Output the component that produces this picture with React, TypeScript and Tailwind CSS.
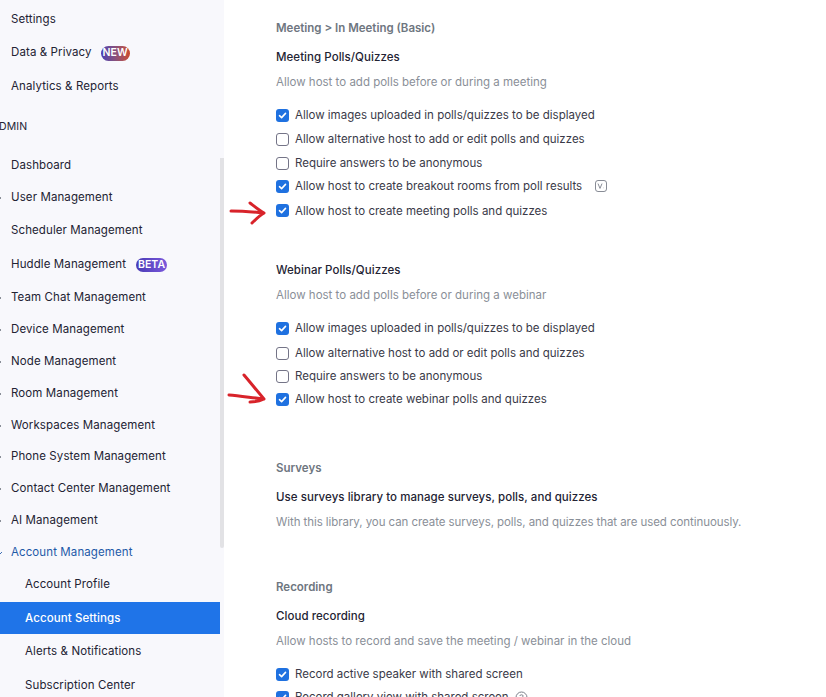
import React from "react";

function Chevron({ down, blue }: { down?: boolean; blue?: boolean }) {
  return (
    <svg width="6" height="6" viewBox="0 0 6 6" className="-ml-[3px] mr-[8px] shrink-0" fill="none" stroke={blue ? "#3f6fb5" : "#8a8f98"} strokeWidth="1">
      {down ? <path d="M1 2 L3 4 L5 2" /> : <path d="M2 1 L4 3 L2 5" />}
    </svg>
  );
}

type Item = { label: string; h: string; chevron?: boolean; badge?: "new" | "beta" };

const items: Item[] = [
  { label: "Settings", h: "h-[32px]" },
  { label: "Data & Privacy", h: "h-[34px]", badge: "new" },
  { label: "Analytics & Reports", h: "h-[34px]" },
];

const admin: Item[] = [
  { label: "Dashboard", h: "h-[32px]" },
  { label: "User Management", h: "h-[32px]", chevron: true },
  { label: "Scheduler Management", h: "h-[34px]" },
  { label: "Huddle Management", h: "h-[34px]", badge: "beta" },
  { label: "Team Chat Management", h: "h-[32px]", chevron: true },
  { label: "Device Management", h: "h-[32px]", chevron: true },
  { label: "Node Management", h: "h-[32px]", chevron: true },
  { label: "Room Management", h: "h-[32px]", chevron: true },
  { label: "Workspaces Management", h: "h-[32px]", chevron: true },
  { label: "Phone System Management", h: "h-[30px]", chevron: true },
  { label: "Contact Center Management", h: "h-[33px]", chevron: true },
  { label: "AI Management", h: "h-[32px]", chevron: true },
];

function NavRow({ item }: { item: Item }) {
  return (
    <div className={`${item.h} flex items-center pt-[2px] ${item.chevron ? "" : "pl-[11px]"} text-[11.5px] tracking-[0.1px] text-[#232333]`}>
      {item.chevron && <Chevron />}
      <span>{item.label}</span>
      {item.badge === "new" && (
        <span className="ml-[9px] flex h-[15px] w-[29px] items-center justify-center rounded-full bg-gradient-to-r from-[#4b3cb4] to-[#cb4a26] text-[10.5px] font-semibold text-white">NEW</span>
      )}
      {item.badge === "beta" && (
        <span className="ml-[10px] flex h-[14px] w-[31px] items-center justify-center rounded-full bg-gradient-to-r from-[#4a3bb5] to-[#7b58dc] text-[10.5px] font-semibold text-white">BETA</span>
      )}
    </div>
  );
}

function Sidebar() {
  return (
    <aside className="relative h-[697px] w-[224px] shrink-0 overflow-hidden bg-[#f8f8fc] pt-[3px]">
      <div className="w-[220px]">
        {items.map((i) => <NavRow key={i.label} item={i} />)}
        <div className="-ml-[1px] flex h-[46px] items-center pt-[2px] text-[10.5px] tracking-[0.1px] text-[#232333]">DMIN</div>
        {admin.map((i) => <NavRow key={i.label} item={i} />)}
        <div className="flex h-[32px] items-center pt-[2px] text-[11.5px] tracking-[0.1px] text-[#1f5aa8]">
          <Chevron down blue />
          <span>Account Management</span>
        </div>
        <div className="flex h-[34px] items-center pl-[25px] text-[11.5px] tracking-[0.1px] text-[#232333]">Account Profile</div>
        <div className="flex h-[32px] items-center bg-[#1f74e8] pl-[25px] pt-[2px] text-[11.5px] font-medium tracking-[0.1px] text-white">Account Settings</div>
        <div className="flex h-[34px] items-center pl-[25px] pt-[2px] text-[11.5px] tracking-[0.1px] text-[#232333]">Alerts &amp; Notifications</div>
        <div className="flex h-[34px] items-center pl-[25px] pt-[2px] text-[11.5px] tracking-[0.1px] text-[#232333]">Subscription Center</div>
      </div>
      <div className="absolute left-[220px] top-[158px] h-[390px] w-[4px] rounded-b-[2px] bg-[#e2e2e5]" />
    </aside>
  );
}

function Check({ label, checked, h, children }: { label: string; checked?: boolean; h: string; children?: React.ReactNode }) {
  return (
    <div className={`${h} flex items-center`}>
      {checked ? (
        <span className="flex h-[13px] w-[13px] shrink-0 items-center justify-center rounded-[3px] bg-[#1f71e0]">
          <svg width="9" height="9" viewBox="0 0 9 9" fill="none" stroke="white" strokeWidth="1.6" strokeLinecap="round" strokeLinejoin="round">
            <path d="M1.5 4.7 L3.6 6.6 L7.5 2.4" />
          </svg>
        </span>
      ) : (
        <span className="h-[13px] w-[13px] shrink-0 rounded-[3px] border border-[#747487] bg-white" />
      )}
      <span className="ml-[6px] pt-[2px] text-[11.5px] text-[#3a3a48]">{label}</span>
      {children}
    </div>
  );
}

function Heading({ children, className = "" }: { children: React.ReactNode; className?: string }) {
  return <div className={`flex h-[28px] items-center pt-[2px] text-[11.5px] font-semibold text-[#6e7680] ${className}`}>{children}</div>;
}
function Title({ children, className = "" }: { children: React.ReactNode; className?: string }) {
  return <div className={`flex h-[30px] items-center pt-[2px] text-[11.5px] font-medium tracking-[0.05px] text-[#232333] ${className}`}>{children}</div>;
}
function Desc({ children, className = "" }: { children: React.ReactNode; className?: string }) {
  return <div className={`flex h-[20px] items-center pt-[2px] text-[11.5px] text-[#8a8f98] ${className}`}>{children}</div>;
}

function Arrow({ className, d }: { className: string; d: string }) {
  return (
    <svg className={`absolute ${className}`} width="44" height="34" viewBox="0 0 44 34" fill="none" stroke="#d8232a" strokeWidth="3" strokeLinecap="round" strokeLinejoin="round">
      <path d={d} />
    </svg>
  );
}

export default function App() {
  return (
    <div className="relative flex h-[697px] w-[826px] overflow-hidden bg-white" style={{ fontFamily: "Inter, 'Liberation Sans', sans-serif" }}>
      <Sidebar />
      <main className="pl-[52px] pt-[14px]">
        <Heading>Meeting &gt; In Meeting (Basic)</Heading>
        <Title>Meeting Polls/Quizzes</Title>
        <Desc>Allow host to add polls before or during a meeting</Desc>
        <div className="mt-[11px]">
          <Check h="h-[24px]" checked label="Allow images uploaded in polls/quizzes to be displayed" />
          <Check h="h-[24px]" label="Allow alternative host to add or edit polls and quizzes" />
          <Check h="h-[24px]" label="Require answers to be anonymous" />
          <Check h="h-[22px]" checked label="Allow host to create breakout rooms from poll results">
            <svg className="ml-[13px]" width="12" height="12" viewBox="0 0 12 12" fill="none" stroke="#7a7f8a" strokeWidth="0.9">
              <rect x="0.5" y="0.5" width="11" height="11" rx="2.5" />
              <path d="M3 3.6 L5 8.4 L7 3.6 M8.6 7.8 L8.9 7.8" />
            </svg>
          </Check>
          <Check h="h-[27px]" checked label="Allow host to create meeting polls and quizzes" />
        </div>
        <Title className="mt-[31px]">Webinar Polls/Quizzes</Title>
        <Desc>Allow host to add polls before or during a webinar</Desc>
        <div className="mt-[11px]">
          <Check h="h-[24px]" checked label="Allow images uploaded in polls/quizzes to be displayed" />
          <Check h="h-[26px]" label="Allow alternative host to add or edit polls and quizzes" />
          <Check h="h-[20px]" label="Require answers to be anonymous" />
          <Check h="h-[26px]" checked label="Allow host to create webinar polls and quizzes" />
        </div>
        <Heading className="mt-[42px]">Surveys</Heading>
        <Title>Use surveys library to manage surveys, polls, and quizzes</Title>
        <Desc className="tracking-[-0.07px]">With this library, you can create surveys, polls, and quizzes that are used continuously.</Desc>
        <Heading className="mt-[41px]">Recording</Heading>
        <Title>Cloud recording</Title>
        <Desc>Allow hosts to record and save the meeting / webinar in the cloud</Desc>
        <div className="mt-[11px]">
          <Check h="h-[24px]" checked label="Record active speaker with shared screen" />
          <Check h="h-[22px]" checked label="Record gallery view with shared screen">
            <svg className="ml-[6px]" width="13" height="13" viewBox="0 0 13 13" fill="none" stroke="#7a7f8a" strokeWidth="1">
              <circle cx="6.5" cy="6.5" r="5.5" />
              <path d="M4.8 5 C4.8 3.4 8.2 3.4 8.2 5 C8.2 6.2 6.5 6.2 6.5 7.6 M6.5 9 L6.5 9.6" />
            </svg>
          </Check>
        </div>
      </main>
      <Arrow className="left-[226px] top-[197px]" d="M5 14 C14 14 28 15 38 16 M24 6 C28 9 33 13 38 16 C33 19 29 23 26 26" />
      <Arrow className="left-[226px] top-[370px]" d="M3 25 C14 26 28 28 38 29 M18 5 C24 12 32 22 38 29 C34 31 29 32 24 32" />
    </div>
  );
}
